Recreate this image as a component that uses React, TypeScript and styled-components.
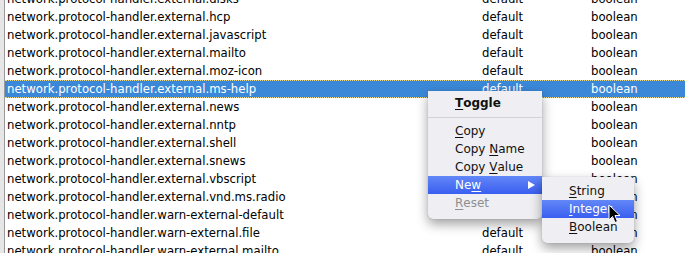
import React from "react";
import styled, { createGlobalStyle } from "styled-components";

const GlobalStyle = createGlobalStyle`
  html, body {
    margin: 0;
    padding: 0;
    background: #ffffff;
    overflow: hidden;
  }
  body {
    font-family: "DejaVu Sans", "Liberation Sans", sans-serif;
  }
`;

const Page = styled.div`
  position: relative;
  width: 685px;
  height: 253px;
  display: flex;
  overflow: hidden;
`;

const Gutter = styled.div`
  width: 4px;
  flex: none;
  background: #e6e6e6;
  border-right: 1px solid #9a9a9a;
`;

const Tree = styled.div`
  flex: 1;
  margin-top: -10px;
`;

const Row = styled.div<{ $selected?: boolean }>`
  display: grid;
  grid-template-columns: 475px 109px 1fr;
  height: 18px;
  box-sizing: border-box;
  padding-left: 2px;
  align-items: center;
  font-size: 11.7px;
  white-space: nowrap;
  color: ${(p) => (p.$selected ? "#ffffff" : "#000000")};
  background: ${(p) => (p.$selected ? "#3b88d8" : "transparent")};
  border-top: 1px dotted ${(p) => (p.$selected ? "#e9d98a" : "transparent")};
  border-bottom: 1px dotted ${(p) => (p.$selected ? "#e9d98a" : "transparent")};
`;

const Cell = styled.span`
  overflow: hidden;
`;

const Menu = styled.div<{ $left: number; $top: number; $width: number; $pad: string; $radius: string }>`
  position: absolute;
  left: ${(p) => p.$left}px;
  top: ${(p) => p.$top}px;
  width: ${(p) => p.$width}px;
  padding: ${(p) => p.$pad};
  background: #efeef2;
  border-radius: ${(p) => p.$radius};
  box-shadow: 0 5px 12px rgba(0, 0, 0, 0.38), 0 0 1px rgba(0, 0, 0, 0.3);
  font-size: 12px;
  color: #111111;
`;

const Item = styled.div<{ $active?: boolean; $disabled?: boolean; $bold?: boolean }>`
  position: relative;
  height: 18px;
  display: flex;
  align-items: center;
  padding-left: 27px;
  font-weight: ${(p) => (p.$bold ? 700 : 400)};
  color: ${(p) => (p.$active ? "#ffffff" : p.$disabled ? "#8e8e92" : "#111111")};
  background: ${(p) =>
    p.$active ? "linear-gradient(#6287f7, #3a5ef0)" : "transparent"};
  u {
    text-decoration-thickness: 1px;
    text-underline-offset: 2px;
  }
`;

const Separator = styled.div`
  height: 10px;
  display: flex;
  align-items: center;
  &::after {
    content: "";
    flex: 1;
    height: 1px;
    background: #d4d3d8;
  }
`;

const Arrow = styled.span`
  position: absolute;
  right: 7px;
  top: 5px;
  width: 0;
  height: 0;
  border-top: 4px solid transparent;
  border-bottom: 4px solid transparent;
  border-left: 7px solid #ffffff;
`;

const Cursor = styled.svg`
  position: absolute;
  left: 608px;
  top: 204px;
`;

const names = [
  "network.protocol-handler.external.disks",
  "network.protocol-handler.external.hcp",
  "network.protocol-handler.external.javascript",
  "network.protocol-handler.external.mailto",
  "network.protocol-handler.external.moz-icon",
  "network.protocol-handler.external.ms-help",
  "network.protocol-handler.external.news",
  "network.protocol-handler.external.nntp",
  "network.protocol-handler.external.shell",
  "network.protocol-handler.external.snews",
  "network.protocol-handler.external.vbscript",
  "network.protocol-handler.external.vnd.ms.radio",
  "network.protocol-handler.warn-external-default",
  "network.protocol-handler.warn-external.file",
  "network.protocol-handler.warn-external.mailto",
];

const App = () => {
  return (
    <Page>
      <GlobalStyle />
      <Gutter />
      <Tree>
        {names.map((n) => (
          <Row key={n} $selected={n.endsWith("ms-help")}>
            <Cell>{n}</Cell>
            <Cell>default</Cell>
            <Cell>boolean</Cell>
          </Row>
        ))}
      </Tree>

      <Menu $left={428} $top={91} $width={114} $pad="3px 0 7px" $radius="0 0 5px 5px">
        <Item $bold><u>T</u>oggle</Item>
        <Separator />
        <Item><u>C</u>opy</Item>
        <Item>Copy&nbsp;<u>N</u>ame</Item>
        <Item>Copy&nbsp;<u>V</u>alue</Item>
        <Item $active>Ne<u>w</u><Arrow /></Item>
        <Item $disabled><u>R</u>eset</Item>
      </Menu>

      <Menu $left={542} $top={177} $width={92} $pad="5px 0 7px" $radius="0 4px 5px 5px">
        <Item><u>S</u>tring</Item>
        <Item $active><u>I</u>nteger</Item>
        <Item><u>B</u>oolean</Item>
      </Menu>

      <Cursor width="14" height="20" viewBox="0 0 14 20">
        <path
          d="M1 1 L1 16 L4.5 12.5 L7 18.5 L9.5 17.5 L7 11.5 L12 11.5 Z"
          fill="#000"
          stroke="#fff"
          strokeWidth="1"
          strokeLinejoin="round"
        />
      </Cursor>
    </Page>
  );
};

export default App;
